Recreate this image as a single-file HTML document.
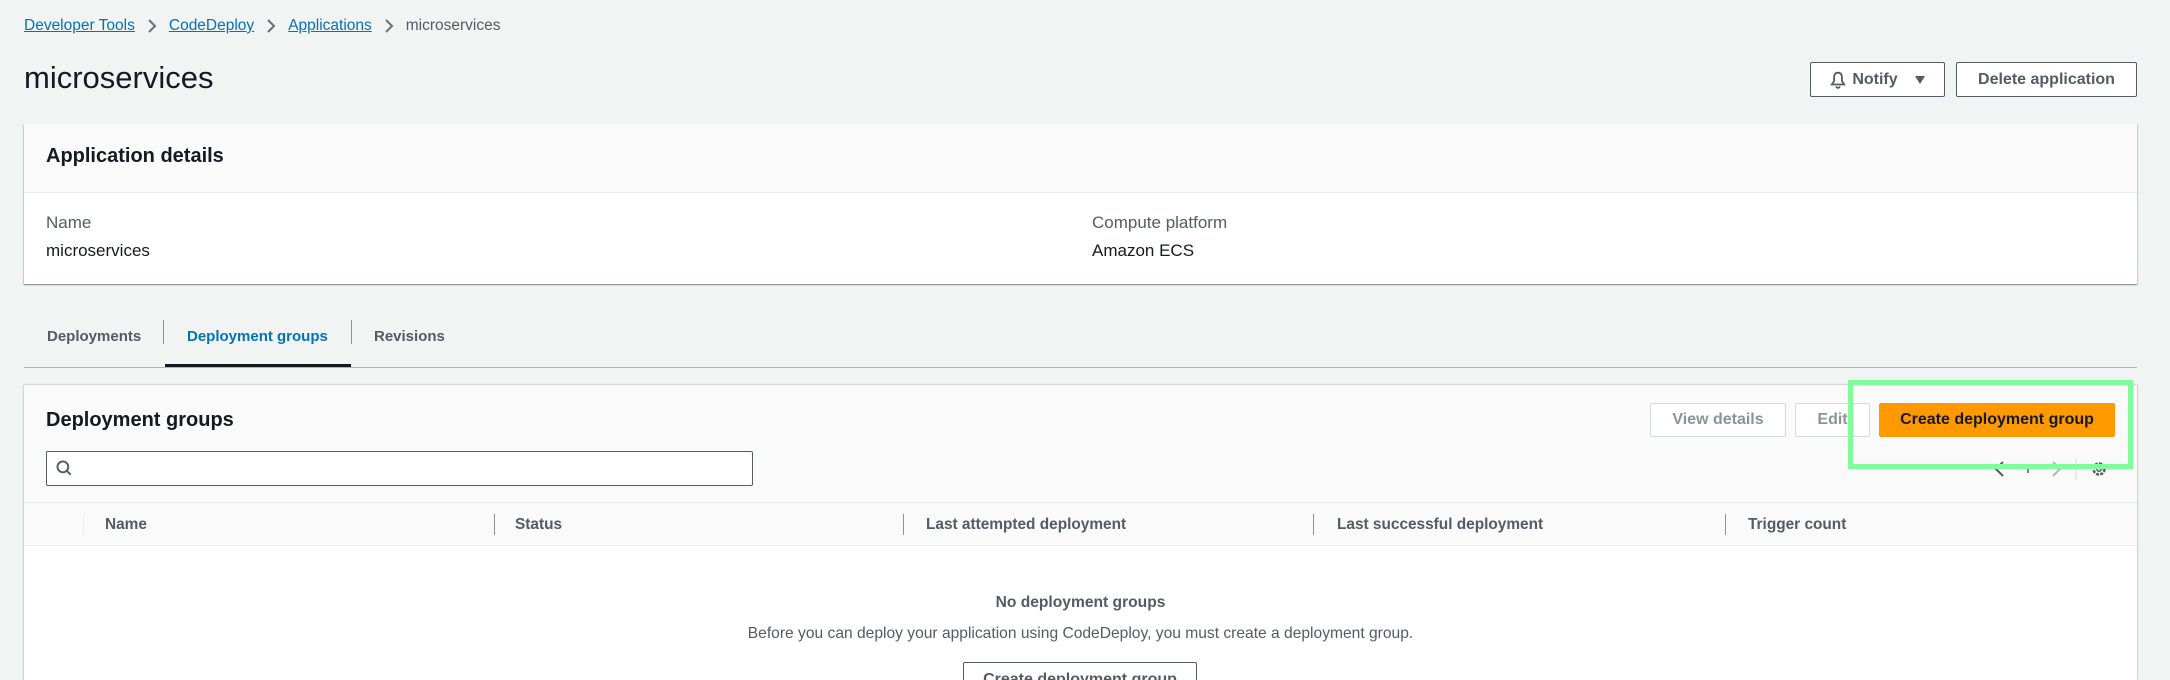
<!DOCTYPE html>
<html><head><meta charset="utf-8"><style>
*{box-sizing:border-box;margin:0;padding:0}
html,body{width:2170px;height:680px;overflow:hidden}
body{background:#f2f3f3;font-family:"Liberation Sans",sans-serif;color:#16191f;position:relative}
.a{position:absolute;white-space:nowrap}
.lnk{color:#0073bb;text-decoration:underline}
.btn{position:absolute;border:1px solid #545b64;border-radius:2px;background:#fff;font-weight:bold;font-size:16px;color:#545b64;display:flex;align-items:center;justify-content:center}
.dis{border-color:#d5dbdb;color:#879596}
.sep{position:absolute;width:1px;background:#879596}
.th{position:absolute;top:516px;font-size:15.4px;font-weight:bold;color:#545b64;white-space:nowrap}
.chev{display:inline-block;vertical-align:middle;margin:0 12px}
</style></head><body>
<div class="a" style="left:24px;top:16px;font-size:15.5px;line-height:20px">
<span class="lnk">Developer Tools</span><svg class="chev" width="10" height="16" viewBox="0 0 10 16"><path d="M2 2 L8 8 L2 14" fill="none" stroke="#687078" stroke-width="2"/></svg><span class="lnk">CodeDeploy</span><svg class="chev" width="10" height="16" viewBox="0 0 10 16"><path d="M2 2 L8 8 L2 14" fill="none" stroke="#687078" stroke-width="2"/></svg><span class="lnk">Applications</span><svg class="chev" width="10" height="16" viewBox="0 0 10 16"><path d="M2 2 L8 8 L2 14" fill="none" stroke="#687078" stroke-width="2"/></svg><span style="color:#545b64">microservices</span></div>
<div class="a" style="left:24px;top:58px;font-size:31px;line-height:40px">microservices</div>
<div class="btn" style="left:1810px;top:62px;width:135px;height:35px"><svg width="18" height="18" viewBox="0 0 16 16" style="margin-right:5px"><path d="M8 1.5 C5 1.5 4.5 4 4.5 6 L4.5 9 L2.5 12 L13.5 12 L11.5 9 L11.5 6 C11.5 4 11 1.5 8 1.5Z M6.5 13.5 A1.5 1.5 0 0 0 9.5 13.5" fill="none" stroke="#545b64" stroke-width="1.6"/></svg>Notify<svg width="12" height="10" viewBox="0 0 12 10" style="margin-left:16px"><path d="M1 1 L11 1 L6 9Z" fill="#545b64"/></svg></div>
<div class="btn" style="left:1956px;top:62px;width:181px;height:35px">Delete application</div>

<div class="a" style="left:24px;top:124px;width:2113px;height:160px;background:#fff;box-shadow:0 1px 1px rgba(0,28,36,.3),1px 1px 1px rgba(0,28,36,.15),-1px 1px 1px rgba(0,28,36,.15)">
<div style="height:69px;background:#fafafa;border-bottom:1px solid #eaeded"></div>
<div class="a" style="left:22px;top:20px;font-size:20px;font-weight:bold;line-height:24px">Application details</div>
<div class="a" style="left:22px;top:89px;font-size:17px;color:#545b64">Name</div>
<div class="a" style="left:22px;top:117px;font-size:17px">microservices</div>
<div class="a" style="left:1068px;top:89px;font-size:17px;color:#545b64">Compute platform</div>
<div class="a" style="left:1068px;top:117px;font-size:17px">Amazon ECS</div>
</div>

<div class="a" style="left:47px;top:328px;font-size:15px;font-weight:bold;color:#545b64">Deployments</div>
<div class="sep" style="left:163px;top:320px;height:24px"></div>
<div class="a" style="left:187px;top:328px;font-size:15px;font-weight:bold;color:#0073bb">Deployment groups</div>
<div class="sep" style="left:351px;top:320px;height:24px"></div>
<div class="a" style="left:374px;top:328px;font-size:15px;font-weight:bold;color:#545b64">Revisions</div>
<div class="a" style="left:24px;top:367px;width:2113px;height:1px;background:#aab7b8"></div>
<div class="a" style="left:165px;top:364px;width:186px;height:3px;background:#16191f"></div>

<div class="a" style="left:24px;top:385px;width:2113px;height:295px;background:#fff;box-shadow:0 -1px 1px rgba(0,28,36,.1),1px 0 1px rgba(0,28,36,.15),-1px 0 1px rgba(0,28,36,.15)">
<div style="height:118px;background:#fafafa;border-bottom:1px solid #eaeded"></div>
<div style="height:43px;background:#fafafa;border-bottom:1px solid #eaeded"></div>
</div>
<div class="a" style="left:46px;top:407px;font-size:20px;font-weight:bold;line-height:26px">Deployment groups</div>
<div class="a" style="left:46px;top:451px;width:707px;height:35px;border:1px solid #545b64;border-radius:2px;background:#fff"><svg width="18" height="18" viewBox="0 0 16 16" style="position:absolute;left:8px;top:7px"><circle cx="7" cy="7" r="4.8" fill="none" stroke="#545b64" stroke-width="1.7"/><path d="M10.5 10.5 L14 14" stroke="#545b64" stroke-width="1.7"/></svg></div>
<div class="btn dis" style="left:1650px;top:403px;width:136px;height:34px">View details</div>
<div class="btn dis" style="left:1795px;top:403px;width:75px;height:34px">Edit</div>
<div class="btn" style="left:1879px;top:403px;width:236px;height:34px;background:#ff9900;border-color:#ff9900;color:#16191f">Create deployment group</div>
<svg class="a" style="left:1990px;top:458px" width="120" height="22" viewBox="0 0 120 22"><path d="M13 4 L6 11 L13 18" fill="none" stroke="#545b64" stroke-width="2"/><path d="M38 7 L38 15" stroke="#545b64" stroke-width="1.5"/><path d="M63 4 L70 11 L63 18" fill="none" stroke="#aab7b8" stroke-width="2"/><path d="M86 0 L86 22" stroke="#d5dbdb"/><circle cx="109" cy="11" r="5.5" fill="none" stroke="#545b64" stroke-width="2.5" stroke-dasharray="3 1.3"/><circle cx="109" cy="11" r="2.2" fill="none" stroke="#545b64" stroke-width="1.5"/></svg>
<div class="a" style="left:1848px;top:380px;width:285px;height:89px;border:5px solid #80fc9c"></div>

<div class="sep" style="left:83px;top:514px;height:21px;background:#eaeded"></div>
<div class="th" style="left:105px">Name</div>
<div class="sep" style="left:494px;top:514px;height:21px"></div>
<div class="th" style="left:515px">Status</div>
<div class="sep" style="left:903px;top:514px;height:21px"></div>
<div class="th" style="left:926px">Last attempted deployment</div>
<div class="sep" style="left:1313px;top:514px;height:21px"></div>
<div class="th" style="left:1337px">Last successful deployment</div>
<div class="sep" style="left:1725px;top:514px;height:21px"></div>
<div class="th" style="left:1748px">Trigger count</div>

<div class="a" style="left:24px;width:2113px;top:594px;text-align:center;font-size:15.6px;font-weight:bold;color:#545b64">No deployment groups</div>
<div class="a" style="left:24px;width:2113px;top:625px;text-align:center;font-size:15.6px;color:#545b64">Before you can deploy your application using CodeDeploy, you must create a deployment group.</div>
<div class="a" style="left:963px;top:662px;width:234px;height:18px;overflow:hidden;border:1px solid #545b64;border-bottom:none;border-radius:2px 2px 0 0;background:#fff;font-weight:bold;font-size:16px;color:#545b64;text-align:center;padding-top:8px">Create deployment group</div>
</body></html>
